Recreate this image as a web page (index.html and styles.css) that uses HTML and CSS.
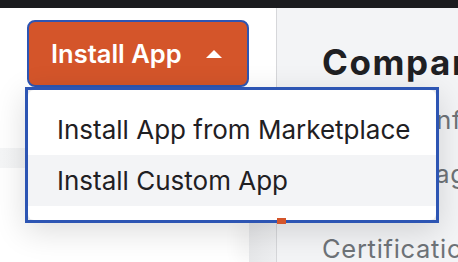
FILE: index.html
```html
<!DOCTYPE html>
<html lang="en">
<head>
    <meta charset="UTF-8">
    <meta name="viewport" content="width=device-width, initial-scale=1.0">
    <title>Apps</title>
    <link rel="stylesheet" href="styles.css">
</head>
<body>
    <div class="topbar"></div>
    <div class="main">
        <!-- Left: sidebar with the install menu -->
        <div class="sidebar">
            <div class="nav">
                <div class="install">
                    <button class="install-btn">
                        Install App
                        <span class="caret"></span>
                    </button>
                    <div class="dropdown">
                        <div class="dropdown-menu">
                            <div class="dropdown-item">Install App from Marketplace</div>
                            <div class="dropdown-item active">Install Custom App</div>
                        </div>
                    </div>
                </div>
                <div class="nav-item selected"></div>
            </div>
            <div class="rail"></div>
        </div>

        <!-- Right: settings content -->
        <div class="content">
            <h1>Company Settings</h1>
            <div class="tab-marker"></div>
            <div class="field">General Information</div>
            <div class="field second">Brand Image</div>
            <div class="field third">Certifications</div>
        </div>
    </div>
</body>
</html>
```

FILE: styles.css
```css
body {
    margin: 0;
    font-family: 'Inter', 'Noto Sans', sans-serif;
    background-color: #ffffff;
    color: #1f2023;
    overflow: hidden;
    height: 262px;
}

.topbar {
    height: 8px;
    background-color: #1b1c1f;
}

.main {
    display: flex;
    height: 254px;
}

.sidebar {
    width: 276px;
    display: flex;
    border-right: 1px solid #d6d7da;
}

.nav {
    flex: 1;
    display: flex;
    flex-direction: column;
}

.rail {
    width: 29px;
    background: linear-gradient(to right, #e6e7e9, #eeeff1);
    margin-top: 214px;
    box-shadow: -12px 0 16px rgba(0, 0, 0, 0.04);
}

.install {
    position: relative;
    margin: 12px 0 0 27px;
}

.install-btn {
    display: flex;
    align-items: center;
    width: 222px;
    height: 67px;
    padding: 0 0 0 22px;
    border: 2px solid #2d55b3;
    border-radius: 8px;
    background-color: #d4552a;
    color: #ffffff;
    font-family: inherit;
    font-size: 25.5px;
    font-weight: 600;
}

.caret {
    margin-left: 24px;
    width: 0;
    height: 0;
    border-left: 8.5px solid transparent;
    border-right: 8.5px solid transparent;
    border-bottom: 8px solid #ffffff;
}

.dropdown {
    position: absolute;
    top: 67px;
    left: -2px;
    width: 408px;
    border: 3px solid #2d55b3;
    background-color: #e9eaec;
    box-shadow: 0 8px 30px rgba(0, 0, 0, 0.14);
    z-index: 5;
}

.dropdown-menu {
    background-color: #ffffff;
    border-radius: 6px;
    padding: 14px 0;
}

.dropdown-item {
    height: 51px;
    display: flex;
    align-items: center;
    padding-left: 29px;
    font-size: 26px;
    color: #1f2023;
}

.dropdown-item.active {
    background-color: #f3f4f6;
}

.nav-item.selected {
    height: 20px;
    margin-top: 61px;
    background: linear-gradient(to right, #f5f6f7, #e6e7e9);
}

.content {
    flex: 1;
    position: relative;
    background-color: #f3f4f6;
    padding-left: 45px;
}

.content h1 {
    margin: 33px 0 0;
    font-size: 35px;
    font-weight: 700;
    letter-spacing: 1.6px;
    white-space: nowrap;
    color: #1f2023;
}

.tab-marker {
    position: absolute;
    left: 0;
    top: 210px;
    width: 9px;
    height: 6px;
    background-color: #d4552a;
    z-index: 6;
}

.field {
    margin-top: 22px;
    font-size: 25.5px;
    letter-spacing: 0.7px;
    color: #6e7378;
    white-space: nowrap;
    line-height: 30px;
}

.field.second {
    margin-top: 24px;
}

.field.third {
    margin-top: 45px;
}
```
